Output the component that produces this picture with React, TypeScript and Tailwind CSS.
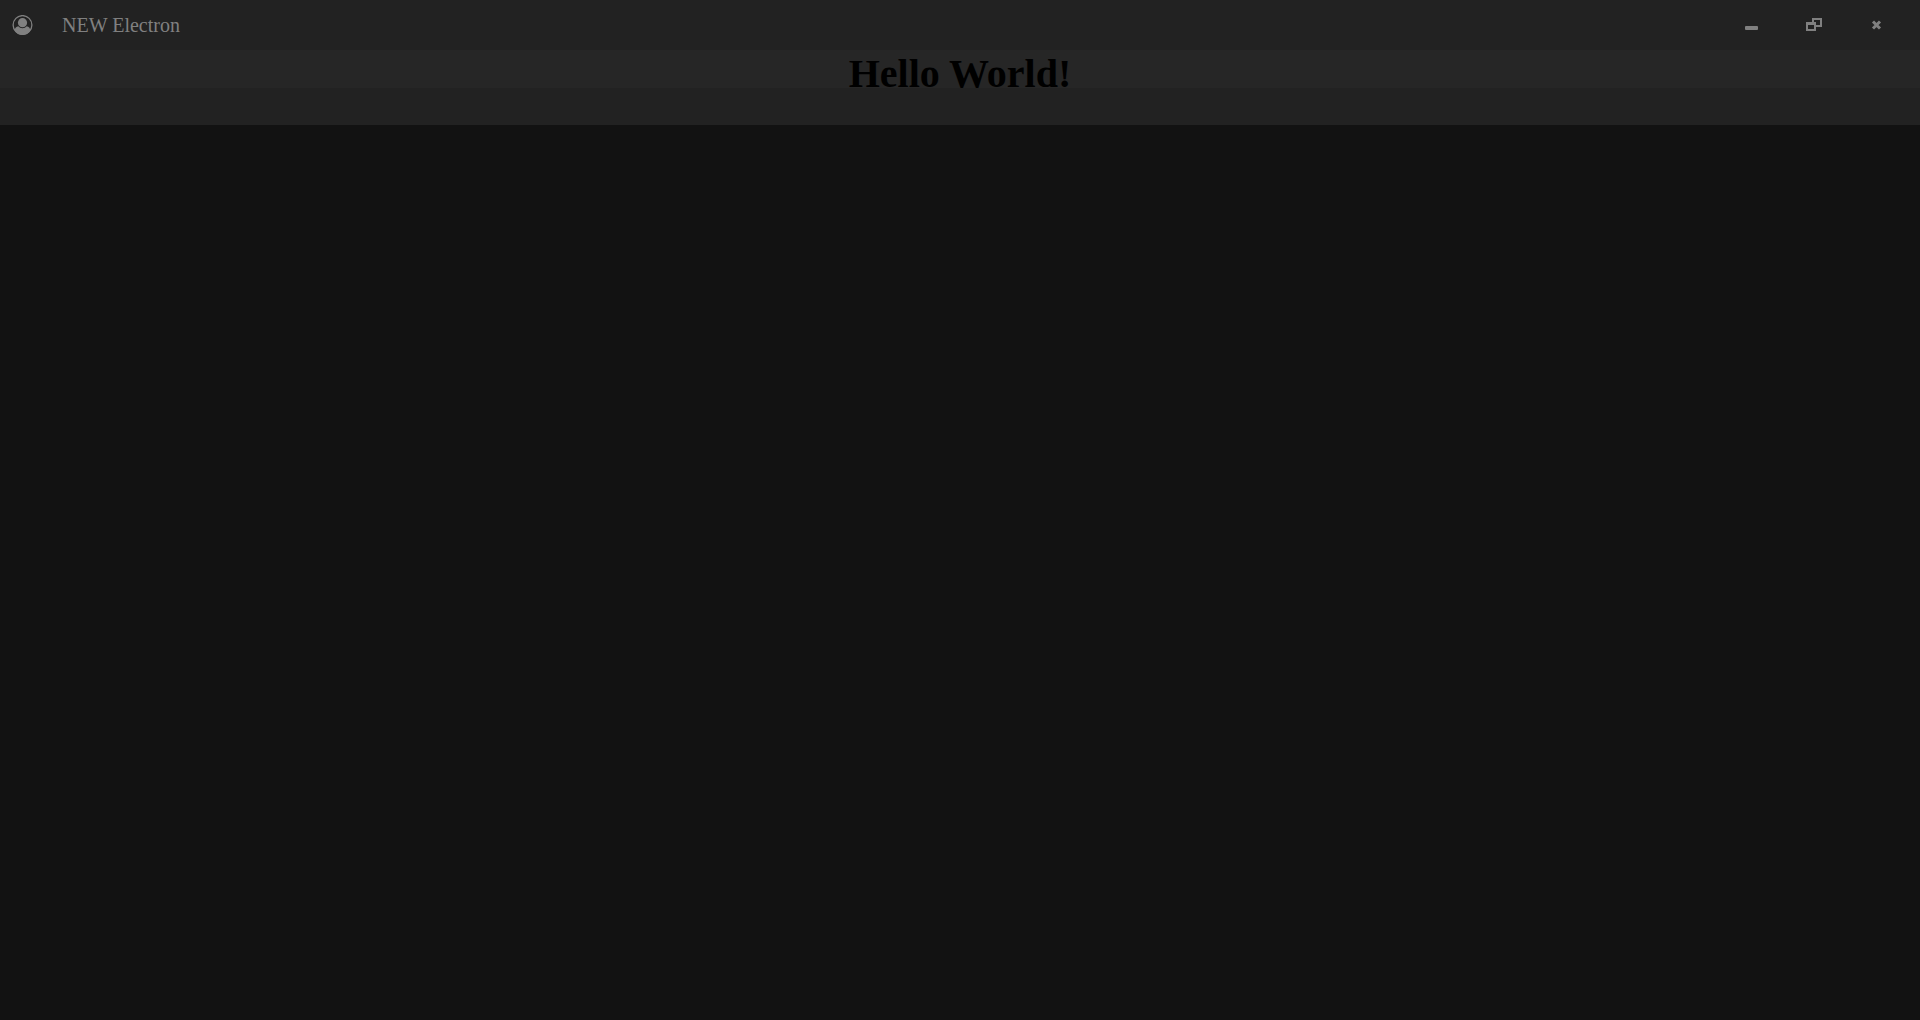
function AccountIcon() {
  return (
    <svg viewBox="0 0 21 20" className="h-5 w-[21px]" fill="none" aria-hidden="true">
      <circle cx="10.5" cy="10" r="9.4" stroke="currentColor" strokeWidth="1.3" />
      <ellipse cx="10.5" cy="7.7" rx="4.6" ry="4.6" fill="currentColor" />
      <path
        d="M2.6 15.4C3 13.2 4.2 11.5 6.3 11.3C7.4 12.6 8.8 13.3 10.5 13.3C12.2 13.3 13.6 12.6 14.7 11.3C16.8 11.5 18 13.2 18.4 15.4C16.6 18.3 13.8 20 10.5 20C7.2 20 4.4 18.3 2.6 15.4Z"
        fill="currentColor"
      />
    </svg>
  );
}

function MinimizeIcon() {
  return (
    <svg viewBox="0 0 16 16" className="size-4" aria-hidden="true">
      <rect x="1" y="9" width="13" height="4" rx="1" fill="currentColor" />
    </svg>
  );
}

function RestoreIcon() {
  return (
    <svg viewBox="0 0 16 16" className="size-4" fill="currentColor" aria-hidden="true">
      <path d="M6 1H16V10H10V8H14V3H8V5H6Z" />
      <path fillRule="evenodd" d="M0 5H10V14H0ZM2 8V12H8V8Z" />
    </svg>
  );
}

function CloseIcon() {
  return (
    <svg viewBox="0 0 16 16" className="size-4" aria-hidden="true">
      <path d="M5 4.5L12 11.5M12 4.5L5 11.5" stroke="currentColor" strokeWidth="3" />
    </svg>
  );
}

const controls = [
  { label: "Minimize", Icon: MinimizeIcon },
  { label: "Restore", Icon: RestoreIcon },
  { label: "Close", Icon: CloseIcon },
];

export default function App() {
  return (
    <div className="min-h-screen bg-[#121212] font-['Liberation_Serif',serif] text-[#808080]">
      <header className="flex h-[50px] items-center bg-[#222222] pr-[13px]">
        <button type="button" aria-label="Account" className="ml-3">
          <AccountIcon />
        </button>
        <span className="ml-[29px] text-xl leading-[23px]">NEW Electron</span>
        <div className="ml-auto flex self-stretch">
          {controls.map(({ label, Icon }) => (
            <button
              key={label}
              type="button"
              aria-label={label}
              className="flex w-[62px] items-center justify-center"
            >
              <Icon />
            </button>
          ))}
        </div>
      </header>
      <main>
        <div className="h-[38px] bg-[#262626] text-center">
          <h1 className="text-[40px] leading-[48px] font-bold text-black">Hello World!</h1>
        </div>
        <div className="h-[37px] bg-[#222222]" />
      </main>
    </div>
  );
}
